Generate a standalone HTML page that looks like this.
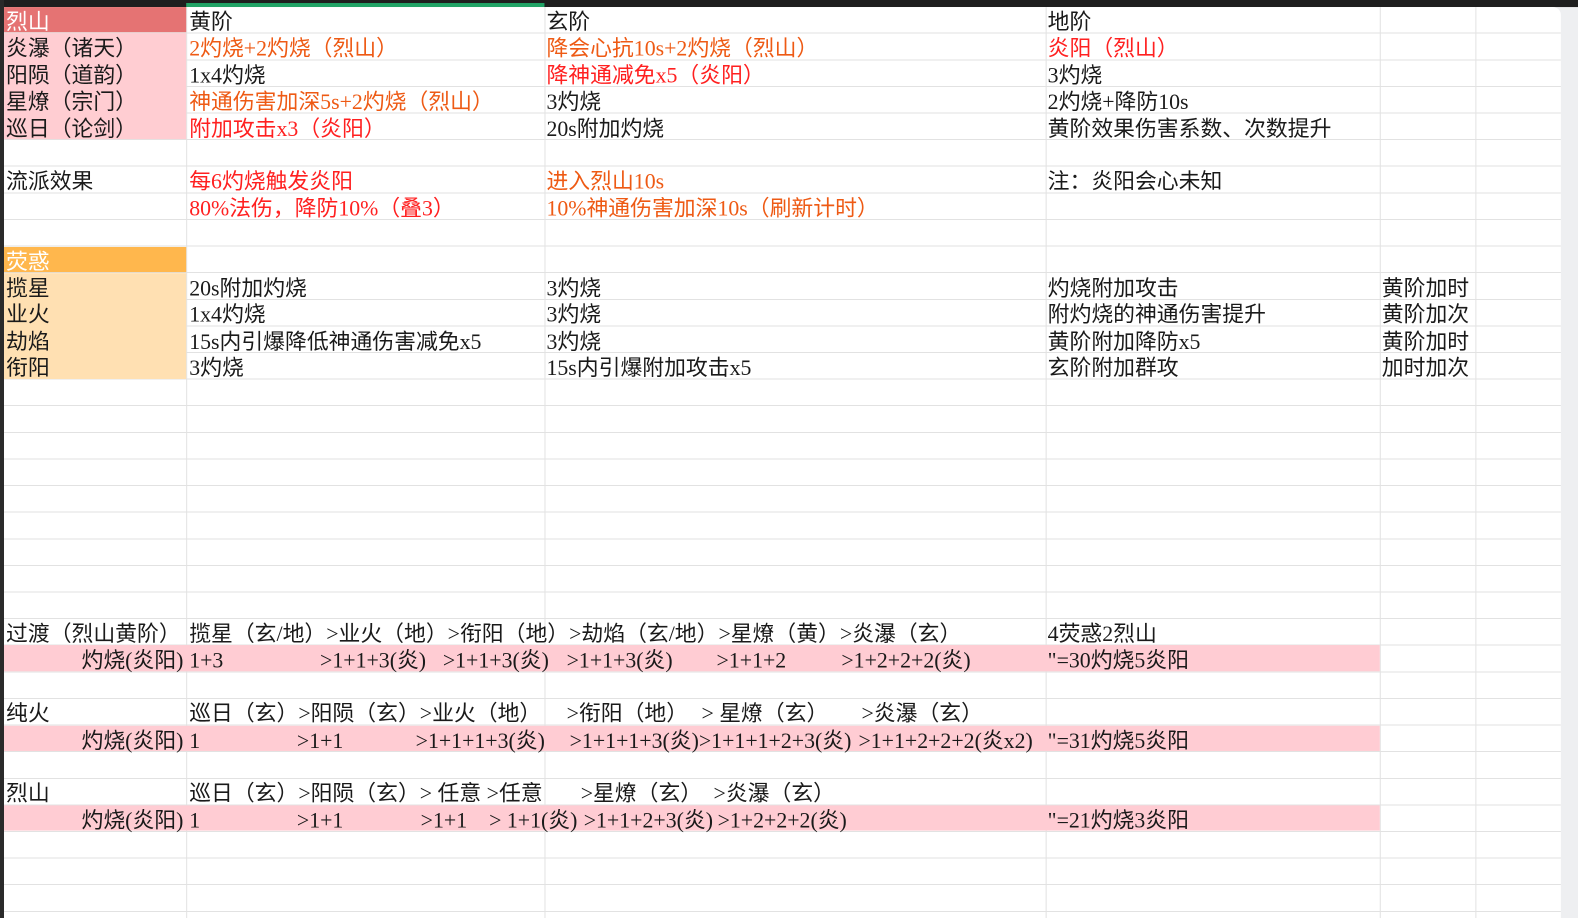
<!DOCTYPE html>
<html><head><meta charset="utf-8"><style>
*{margin:0;padding:0;box-sizing:border-box}
body{width:1578px;height:911px;overflow:hidden;background:#eeeff1;position:relative;font-family:"Liberation Serif","Noto Sans CJK SC",serif;font-size:21.7px;color:#1a1a1a}
#wrap{position:absolute;left:0;top:0;width:1578px;height:911px;transform:scale(1.0064,1.008);transform-origin:0 0}
#sheet{position:absolute;left:4px;top:7px;width:1547px;height:904px;background:#fff;border-top-right-radius:8px;
background-image:repeating-linear-gradient(to bottom,transparent 0,transparent 25.4px,#e2e2e2 25.4px,#e2e2e2 26.4px)}
.top{position:absolute;left:0;top:0;width:1578px;height:7px;background:#1e1e1e}
.lb{position:absolute;left:0;top:0;width:4px;height:911px;background:#2a2a2a}
.green{position:absolute;left:185px;top:3px;width:356px;height:4px;background:#21a366}
.v{position:absolute;top:7px;width:1px;height:904px;background:#e2e2e2}
.c{position:absolute;height:25.4px;line-height:26px;white-space:pre}
.t{position:absolute;line-height:26px;white-space:pre;margin-top:2px}
.c .t,.c{padding-top:0}
.o{color:#ee5a14}.r{color:#ff2020}
</style></head><body><div id="wrap">
<div class="top"></div><div class="lb"></div><div class="green"></div>
<div id="sheet"></div>
<div class="v" style="left:185px"></div><div class="v" style="left:541px"></div><div class="v" style="left:1039px"></div><div class="v" style="left:1371px"></div><div class="v" style="left:1466px"></div>
<div class="c" style="left:4px;top:7px;width:181px;background:#e57373;color:#fff;padding-left:2px;line-height:30px">烈山</div>
<div class="c" style="left:4px;top:33.4px;width:181px;height:105px;background:#ffcdd2"></div>
<div class="c" style="left:4px;top:244.6px;width:181px;background:#ffb74d;color:#fff;padding-left:2px;line-height:30px">荧惑</div>
<div class="c" style="left:4px;top:271px;width:181px;height:105px;background:#ffe0b2"></div>
<div class="c" style="left:4px;top:640.4px;width:1367px;background:#ffccd3"></div>
<div class="c" style="left:4px;top:719.6px;width:1367px;background:#ffccd3"></div>
<div class="c" style="left:4px;top:798.8px;width:1367px;background:#ffccd3"></div>
<div class="t" style="left:188px;top:7px">黄阶</div><div class="t" style="left:543px;top:7px">玄阶</div><div class="t" style="left:1041px;top:7px">地阶</div>
<div class="t" style="left:6px;top:33.4px">炎瀑（诸天）</div><div class="t o" style="left:188px;top:33.4px">2灼烧+2灼烧（烈山）</div><div class="t o" style="left:543px;top:33.4px">降会心抗10s+2灼烧（烈山）</div><div class="t r" style="left:1041px;top:33.4px">炎阳（烈山）</div>
<div class="t" style="left:6px;top:59.8px">阳陨（道韵）</div><div class="t" style="left:188px;top:59.8px">1x4灼烧</div><div class="t r" style="left:543px;top:59.8px">降神通减免x5（炎阳）</div><div class="t" style="left:1041px;top:59.8px">3灼烧</div>
<div class="t" style="left:6px;top:86.2px">星燎（宗门）</div><div class="t o" style="left:188px;top:86.2px">神通伤害加深5s+2灼烧（烈山）</div><div class="t" style="left:543px;top:86.2px">3灼烧</div><div class="t" style="left:1041px;top:86.2px">2灼烧+降防10s</div>
<div class="t" style="left:6px;top:112.6px">巡日（论剑）</div><div class="t r" style="left:188px;top:112.6px">附加攻击x3（炎阳）</div><div class="t" style="left:543px;top:112.6px">20s附加灼烧</div><div class="t" style="left:1041px;top:112.6px">黄阶效果伤害系数、次数提升</div>
<div class="t" style="left:6px;top:165.4px">流派效果</div><div class="t r" style="left:188px;top:165.4px">每6灼烧触发炎阳</div><div class="t o" style="left:543px;top:165.4px">进入烈山10s</div><div class="t" style="left:1041px;top:165.4px">注：炎阳会心未知</div>
<div class="t r" style="left:188px;top:191.8px">80%法伤，降防10%（叠3）</div><div class="t o" style="left:543px;top:191.8px">10%神通伤害加深10s（刷新计时）</div>
<div class="t" style="left:6px;top:271px">揽星</div><div class="t" style="left:188px;top:271px">20s附加灼烧</div><div class="t" style="left:543px;top:271px">3灼烧</div><div class="t" style="left:1041px;top:271px">灼烧附加攻击</div><div class="t" style="left:1373px;top:271px">黄阶加时</div>
<div class="t" style="left:6px;top:297.4px">业火</div><div class="t" style="left:188px;top:297.4px">1x4灼烧</div><div class="t" style="left:543px;top:297.4px">3灼烧</div><div class="t" style="left:1041px;top:297.4px">附灼烧的神通伤害提升</div><div class="t" style="left:1373px;top:297.4px">黄阶加次</div>
<div class="t" style="left:6px;top:323.8px">劫焰</div><div class="t" style="left:188px;top:323.8px">15s内引爆降低神通伤害减免x5</div><div class="t" style="left:543px;top:323.8px">3灼烧</div><div class="t" style="left:1041px;top:323.8px">黄阶附加降防x5</div><div class="t" style="left:1373px;top:323.8px">黄阶加时</div>
<div class="t" style="left:6px;top:350.2px">衔阳</div><div class="t" style="left:188px;top:350.2px">3灼烧</div><div class="t" style="left:543px;top:350.2px">15s内引爆附加攻击x5</div><div class="t" style="left:1041px;top:350.2px">玄阶附加群攻</div><div class="t" style="left:1373px;top:350.2px">加时加次</div>
<div class="t" style="left:6px;top:614px">过渡（烈山黄阶）</div><div class="t" style="left:188px;top:614px">揽星（玄/地）>业火（地）>衔阳（地）>劫焰（玄/地）>星燎（黄）>炎瀑（玄）</div><div class="t" style="left:1041px;top:614px">4荧惑2烈山</div>
<div class="t" style="left:81px;top:640.4px">灼烧(炎阳)</div><div class="t" style="left:188px;top:640.4px">1+3</div><div class="t" style="left:318px;top:640.4px">>1+1+3(炎)</div><div class="t" style="left:440px;top:640.4px">>1+1+3(炎)</div><div class="t" style="left:563px;top:640.4px">>1+1+3(炎)</div><div class="t" style="left:712px;top:640.4px">>1+1+2</div><div class="t" style="left:836px;top:640.4px">>1+2+2+2(炎)</div><div class="t" style="left:1041px;top:640.4px">"=30灼烧5炎阳</div>
<div class="t" style="left:6px;top:693.2px">纯火</div><div class="t" style="left:188px;top:693.2px">巡日（玄）>阳陨（玄）>业火（地）</div><div class="t" style="left:563px;top:693.2px">>衔阳（地）</div><div class="t" style="left:697px;top:693.2px">> 星燎（玄）</div><div class="t" style="left:856px;top:693.2px">>炎瀑（玄）</div>
<div class="t" style="left:81px;top:719.6px">灼烧(炎阳)</div><div class="t" style="left:188px;top:719.6px">1</div><div class="t" style="left:295px;top:719.6px">>1+1</div><div class="t" style="left:413px;top:719.6px">>1+1+1+3(炎)</div><div class="t" style="left:566px;top:719.6px">>1+1+1+3(炎)>1+1+1+2+3(炎)</div><div class="t" style="left:853px;top:719.6px">>1+1+2+2+2(炎x2)</div><div class="t" style="left:1041px;top:719.6px">"=31灼烧5炎阳</div>
<div class="t" style="left:6px;top:772.4px">烈山</div><div class="t" style="left:188px;top:772.4px">巡日（玄）>阳陨（玄）> 任意 >任意</div><div class="t" style="left:577px;top:772.4px">>星燎（玄）</div><div class="t" style="left:709px;top:772.4px">>炎瀑（玄）</div>
<div class="t" style="left:81px;top:798.8px">灼烧(炎阳)</div><div class="t" style="left:188px;top:798.8px">1</div><div class="t" style="left:295px;top:798.8px">>1+1</div><div class="t" style="left:418px;top:798.8px">>1+1</div><div class="t" style="left:486px;top:798.8px">> 1+1(炎)</div><div class="t" style="left:580px;top:798.8px">>1+1+2+3(炎)</div><div class="t" style="left:713px;top:798.8px">>1+2+2+2(炎)</div><div class="t" style="left:1041px;top:798.8px">"=21灼烧3炎阳</div>
</div></body></html>
